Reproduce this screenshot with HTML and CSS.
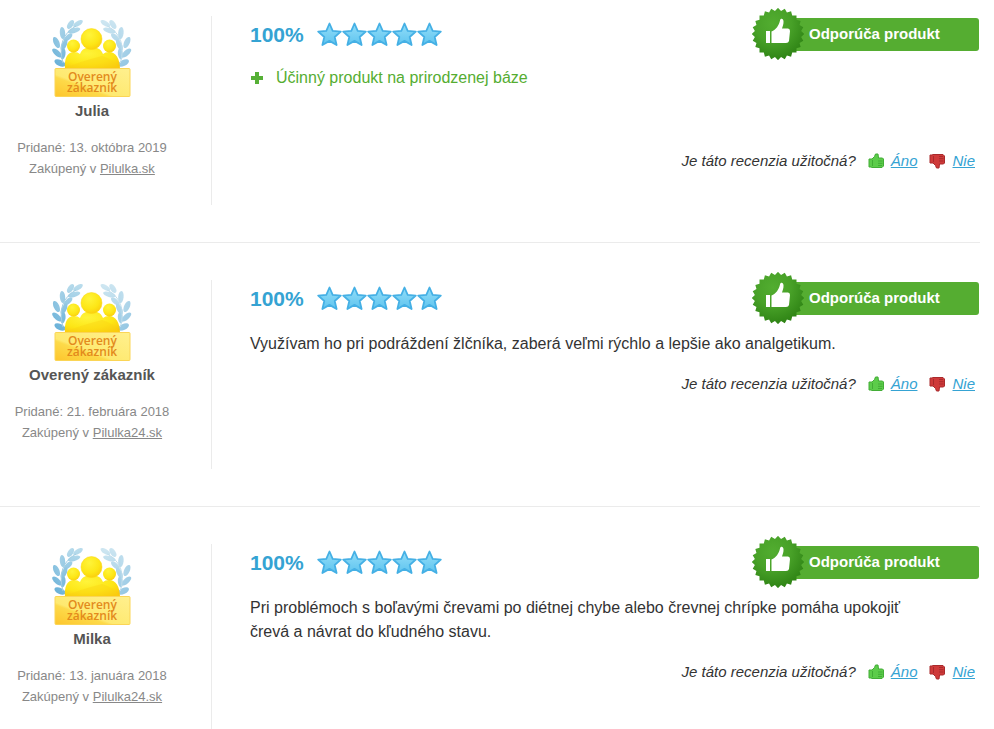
FILE: index.html
```html
<!DOCTYPE html>
<html lang="sk">
<head>
  <meta charset="UTF-8">
  <meta name="viewport" content="width=device-width, initial-scale=1.0">
  <title>Recenzie</title>
  <link rel="stylesheet" href="styles.css">
</head>
<body>

  <!-- shared icons -->
  <svg class="sprite" width="0" height="0" aria-hidden="true">
    <defs>
      <linearGradient id="leafBlue" gradientUnits="userSpaceOnUse" x1="24" y1="4" x2="6" y2="50">
        <stop offset="0" stop-color="#b9dcec"/>
        <stop offset="1" stop-color="#68b0d8"/>
      </linearGradient>
      <radialGradient id="gold" cx="0.4" cy="0.3" r="0.8">
        <stop offset="0" stop-color="#fff43a"/>
        <stop offset="0.6" stop-color="#fde616"/>
        <stop offset="1" stop-color="#fac70c"/>
      </radialGradient>
      <linearGradient id="plate" x1="0" y1="1" x2="1" y2="0">
        <stop offset="0" stop-color="#fdc52c"/>
        <stop offset="0.35" stop-color="#fdda4a"/>
        <stop offset="0.4" stop-color="#fee970"/>
        <stop offset="1" stop-color="#fff08e"/>
      </linearGradient>
      <linearGradient id="starFill" x1="0" y1="0" x2="0" y2="1">
        <stop offset="0" stop-color="#93def9"/>
        <stop offset="1" stop-color="#5fc4ee"/>
      </linearGradient>
      <radialGradient id="sealFill" cx="0.4" cy="0.3" r="0.7">
        <stop offset="0" stop-color="#52ad30"/>
        <stop offset="0.5" stop-color="#48a128"/>
        <stop offset="1" stop-color="#2f8415"/>
      </radialGradient>
      <clipPath id="sealShape">
        <rect x="7.500" y="7.500" width="37" height="37"/>
        <rect x="7.500" y="7.500" width="37" height="37" transform="rotate(15 26 26)"/>
        <rect x="7.500" y="7.500" width="37" height="37" transform="rotate(30 26 26)"/>
        <rect x="7.500" y="7.500" width="37" height="37" transform="rotate(45 26 26)"/>
        <rect x="7.500" y="7.500" width="37" height="37" transform="rotate(60 26 26)"/>
        <rect x="7.500" y="7.500" width="37" height="37" transform="rotate(75 26 26)"/>
      </clipPath>
      <g id="laurel" fill="url(#leafBlue)">
        <ellipse cx="26" cy="6.500" rx="5.500" ry="2.400" transform="rotate(-32 26 6.500)"/>
        <ellipse cx="18.500" cy="7.500" rx="5" ry="2.600" transform="rotate(-58 18.500 7.500)"/>
        <ellipse cx="22" cy="13.500" rx="6.500" ry="2.500" transform="rotate(-16 22 13.500)"/>
        <ellipse cx="10.500" cy="16" rx="6" ry="2.700" transform="rotate(-96 10.500 16)"/>
        <ellipse cx="16" cy="20.500" rx="5.500" ry="2.500" transform="rotate(-42 16 20.500)"/>
        <ellipse cx="4.500" cy="25.500" rx="6" ry="2.800" transform="rotate(65 4.500 25.500)"/>
        <ellipse cx="12" cy="28" rx="6" ry="2.600" transform="rotate(-65 12 28)"/>
        <ellipse cx="5" cy="36" rx="6" ry="2.700" transform="rotate(42 5 36)"/>
        <ellipse cx="11" cy="37" rx="5.500" ry="2.500" transform="rotate(-82 11 37)"/>
        <ellipse cx="8" cy="46" rx="6" ry="3" transform="rotate(25 8 46)"/>
        <path d="M24 9Q4 20 11 46" fill="none" stroke="#a5cfe3" stroke-width="1"/>
      </g>
    </defs>

    <symbol id="verified" viewBox="0 0 80 82">
      <use href="#laurel"/>
      <use href="#laurel" transform="translate(79.400 0) scale(-1 1)" opacity="0.700"/>
      <path d="M13 52C12 42 15 35 22 35Q26 35 28 37C30 32 34 30 39.500 30S49 32 51 37Q53 35 57 35C64 35 68 42 68 52Z" fill="url(#gold)"/>
      <circle cx="21.500" cy="29" r="6.500" fill="url(#gold)"/>
      <circle cx="57.500" cy="29" r="6.500" fill="url(#gold)"/>
      <circle cx="39.500" cy="22" r="10.500" fill="url(#gold)" stroke="#fbd40f" stroke-width="0.500"/>
      <path d="M13 51Q30 44 50 39Q62 42 67 51Z" fill="#fbd114" opacity="0.400"/>
      <rect x="3" y="51.500" width="75" height="28" rx="1" fill="url(#plate)" stroke="#fbd556"/>
    </symbol>

    <symbol id="star" viewBox="0 0 25 25">
      <path d="M12.500 1.500L15.700 8.900L23.800 9.600L17.700 15L19.600 23L12.500 18.900L5.400 23L7.300 15L1.200 9.600L9.300 8.900Z" fill="url(#starFill)" stroke="#45b0e5" stroke-width="1.800" stroke-linejoin="round"/>
    </symbol>

    <symbol id="seal" viewBox="0 0 52 52">
      <rect width="52" height="52" fill="url(#sealFill)" clip-path="url(#sealShape)"/>
      <path d="M14 23h4v12h-4zM19.500 23.500C24 22 27 17 28 12.500C28.300 10 31 10 31.500 13C31.800 16 30.500 18.500 30 20.500H36Q38 20.500 38 23L37 33Q36.500 35 34 35H19.500Z" fill="#fff"/>
    </symbol>

    <symbol id="plus" viewBox="0 0 14 14">
      <path d="M5 1h4v4h4v4h-4v4h-4v-4h-4v-4h4z" fill="#56b036"/>
    </symbol>

    <symbol id="hand" viewBox="0 0 16 16">
      <path d="M1 6H4L6.500 3.500L7.500 1H10L10.500 5H14.500L15.500 6V13L14 14.500H4L3 14H1Z" stroke-linejoin="round"/>
      <path d="M4.500 7V13M10 8H14.500M10 10.300H14.500M10 12.500H14" fill="none"/>
    </symbol>
  </svg>

  <main class="reviews">

    <article class="review">
      <div class="author">
        <svg class="author-badge" viewBox="0 0 80 82">
          <use href="#verified"/>
          <text><tspan x="16" y="64">Overený</tspan> <tspan x="15" y="75">zákazník</tspan></text>
        </svg>
        <strong class="author-name">Julia</strong>
        <p class="author-meta">Pridané: 13. októbra 2019<br>Zakúpený v <a href="#">Pilulka.sk</a></p>
      </div>
      <div class="content">
        <div class="rating">
          <span class="percent">100%</span>
          <span class="stars">
            <svg><use href="#star"/></svg><svg><use href="#star"/></svg><svg><use href="#star"/></svg><svg><use href="#star"/></svg><svg><use href="#star"/></svg>
          </span>
          <span class="recommend"><svg class="seal"><use href="#seal"/></svg>Odporúča produkt</span>
        </div>
        <ul class="pros">
          <li><svg><use href="#plus"/></svg>Účinný produkt na prirodzenej báze</li>
        </ul>
        <p class="helpful">
          Je táto recenzia užitočná?
          <a class="yes" href="#"><svg><use href="#hand"/></svg><span>Áno</span></a>
          <a class="no" href="#"><svg><use href="#hand"/></svg><span>Nie</span></a>
        </p>
      </div>
    </article>

    <article class="review">
      <div class="author">
        <svg class="author-badge" viewBox="0 0 80 82">
          <use href="#verified"/>
          <text><tspan x="16" y="64">Overený</tspan> <tspan x="15" y="75">zákazník</tspan></text>
        </svg>
        <strong class="author-name">Overený zákazník</strong>
        <p class="author-meta">Pridané: 21. februára 2018<br>Zakúpený v <a href="#">Pilulka24.sk</a></p>
      </div>
      <div class="content">
        <div class="rating">
          <span class="percent">100%</span>
          <span class="stars">
            <svg><use href="#star"/></svg><svg><use href="#star"/></svg><svg><use href="#star"/></svg><svg><use href="#star"/></svg><svg><use href="#star"/></svg>
          </span>
          <span class="recommend"><svg class="seal"><use href="#seal"/></svg>Odporúča produkt</span>
        </div>
        <p class="text">Využívam ho pri podráždení žlčníka, zaberá veľmi rýchlo a lepšie ako analgetikum.</p>
        <p class="helpful">
          Je táto recenzia užitočná?
          <a class="yes" href="#"><svg><use href="#hand"/></svg><span>Áno</span></a>
          <a class="no" href="#"><svg><use href="#hand"/></svg><span>Nie</span></a>
        </p>
      </div>
    </article>

    <article class="review">
      <div class="author">
        <svg class="author-badge" viewBox="0 0 80 82">
          <use href="#verified"/>
          <text><tspan x="16" y="64">Overený</tspan> <tspan x="15" y="75">zákazník</tspan></text>
        </svg>
        <strong class="author-name">Milka</strong>
        <p class="author-meta">Pridané: 13. januára 2018<br>Zakúpený v <a href="#">Pilulka24.sk</a></p>
      </div>
      <div class="content">
        <div class="rating">
          <span class="percent">100%</span>
          <span class="stars">
            <svg><use href="#star"/></svg><svg><use href="#star"/></svg><svg><use href="#star"/></svg><svg><use href="#star"/></svg><svg><use href="#star"/></svg>
          </span>
          <span class="recommend"><svg class="seal"><use href="#seal"/></svg>Odporúča produkt</span>
        </div>
        <p class="text">Pri problémoch s boľavými črevami po diétnej chybe alebo črevnej chrípke pomáha upokojiť črevá a návrat do kľudného stavu.</p>
        <p class="helpful">
          Je táto recenzia užitočná?
          <a class="yes" href="#"><svg><use href="#hand"/></svg><span>Áno</span></a>
          <a class="no" href="#"><svg><use href="#hand"/></svg><span>Nie</span></a>
        </p>
      </div>
    </article>

  </main>

</body>
</html>
```
FILE: styles.css
```css
:root {
  --green: #55ad31;
  --blue: #35a3d3;
  --line: #ebebeb;
}

* {
  margin: 0;
  padding: 0;
  box-sizing: border-box;
}

body {
  font-family: "Liberation Sans", Arial, sans-serif;
  font-size: 16px;
  line-height: 24px;
  color: #333;
  background: #fff;
}

svg {
  display: block;
  flex: none;
}

.sprite {
  position: absolute;
}

.reviews {
  padding: 16px 14px 0 0;
}

.review {
  display: flex;
  padding-bottom: 37px;
  margin-bottom: 37px;
  border-bottom: 1px solid var(--line);
}

.review:last-child {
  padding-bottom: 0;
  margin-bottom: 0;
  border-bottom: 0;
}

/* left column */
.author {
  display: flex;
  flex-direction: column;
  align-items: center;
  flex: 0 0 212px;
  padding: 1px 27px 26px 0;
  border-right: 1px solid var(--line);
  text-align: center;
}

.author-badge {
  width: 80px;
  height: 82px;
}

.author-badge text {
  font-family: "Open Sans", sans-serif;
  font-size: 12px;
  font-weight: 600;
  fill: #e38a1c;
}

.author-name {
  margin: 2px 0 16px;
  font-size: 15px;
  line-height: 20px;
  color: #555;
}

.author-meta {
  font-size: 13px;
  line-height: 21px;
  color: #888;
  white-space: nowrap;
}

.author-meta a {
  color: inherit;
}

/* right column */
.content {
  flex: 1;
  min-width: 0;
  padding-left: 38px;
}

.rating {
  display: flex;
  align-items: center;
  height: 37px;
}

.percent {
  margin-right: 13px;
  padding-top: 1px;
  font-size: 21px;
  font-weight: bold;
  color: var(--blue);
}

.stars {
  display: flex;
}

.stars svg {
  width: 25px;
  height: 25px;
}

.recommend {
  position: relative;
  width: 201px;
  margin: 0 1px 0 auto;
  padding: 0 0 2px 31px;
  border-radius: 3px;
  background: var(--green);
  font-size: 15px;
  font-weight: bold;
  line-height: 31px;
  color: #fff;
}

.seal {
  position: absolute;
  top: -10px;
  left: -26px;
  width: 52px;
  height: 52px;
}

.pros {
  margin-top: 13px;
  padding-bottom: 43px;
  list-style: none;
  color: var(--green);
}

.pros li {
  display: flex;
  align-items: center;
  gap: 12px;
}

.pros svg {
  width: 14px;
  height: 14px;
}

.text {
  margin-top: 15px;
  padding-right: 40px;
}

.helpful {
  display: flex;
  justify-content: flex-end;
  align-items: center;
  gap: 12px;
  margin-top: 16px;
  padding-right: 5px;
  font-size: 15px;
  font-style: italic;
}

.helpful a {
  display: flex;
  align-items: center;
  gap: 7px;
  color: var(--blue);
  text-decoration: none;
}

.helpful a span {
  text-decoration: underline;
}

.helpful svg {
  width: 16px;
  height: 16px;
}

.yes svg {
  fill: #5ccc4a;
  stroke: #42ad36;
}

.no svg {
  fill: #cf3a3a;
  stroke: #a92a2c;
  transform: scaleY(-1);
}
```
